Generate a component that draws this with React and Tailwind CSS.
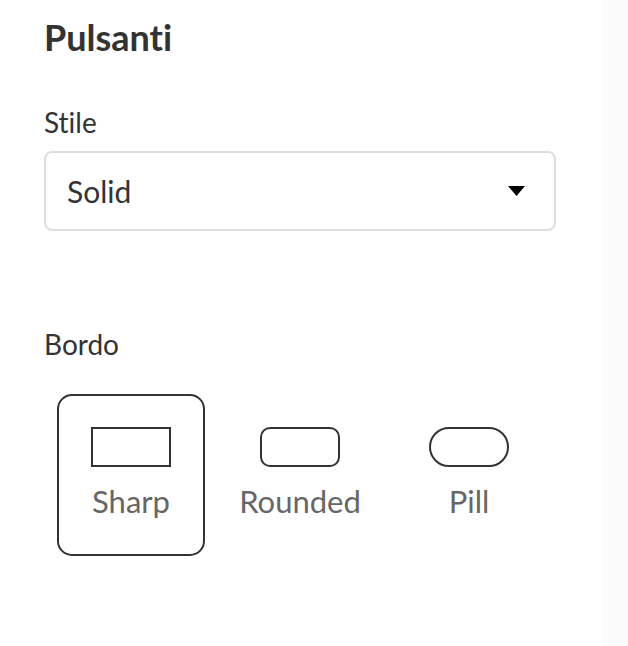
import React from "react";

function Option({ label, selected, shape }) {
  const shapeCls =
    shape === "sharp"
      ? "rounded-none"
      : shape === "rounded"
      ? "rounded-[10px]"
      : "rounded-full";
  return (
    <div
      className={`flex w-[148px] flex-col items-center rounded-[15px] border-2 pt-[31px] pb-[38px] ${
        selected ? "border-[#333333]" : "border-transparent"
      }`}
    >
      <div className={`h-[40px] w-[80px] border-2 border-[#333333] ${shapeCls}`} />
      <div className="mt-[19px] text-[31px] leading-[30px] text-[#666666]">{label}</div>
    </div>
  );
}

export default function App() {
  return (
    <div
      className="flex min-h-[646px] w-full bg-white text-[#333333] [font-variant-ligatures:none]"
      style={{ fontFamily: "Lato, 'Open Sans', sans-serif" }}
    >
      <div className="flex-1 pl-[44px] pt-[17px]">
        <h2 className="text-[36px] font-bold leading-[40px]">Pulsanti</h2>
        <div className="mt-[50px] text-[28px] leading-[30px]">Stile</div>
        <div className="mt-[14px] flex h-[80px] w-[512px] items-center justify-between rounded-[8px] border-2 border-[#dddddd] pl-[21px] pr-[29px]">
          <span className="text-[30px] leading-[36px]">Solid</span>
          <svg width="17" height="10" viewBox="0 0 17 10">
            <path d="M0 0 H17 L8.5 10 Z" fill="#000" />
          </svg>
        </div>
        <div className="mt-[98px] text-[28px] leading-[30px]">Bordo</div>
        <div className="mt-[35px] ml-[13px] flex gap-[21px]">
          <Option label="Sharp" selected shape="sharp" />
          <Option label="Rounded" shape="rounded" />
          <Option label="Pill" shape="pill" />
        </div>
      </div>
      <div className="w-[26px] bg-[#fbfbfb]" />
    </div>
  );
}
